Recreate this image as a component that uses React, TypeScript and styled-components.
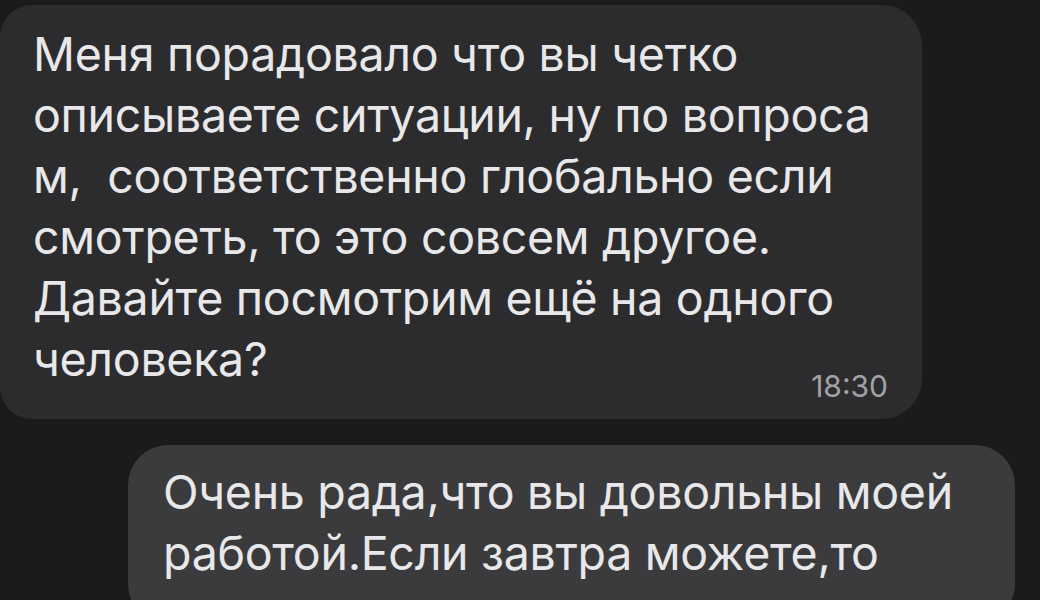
import styled, { createGlobalStyle } from "styled-components";

const GlobalStyle = createGlobalStyle`
  html, body {
    margin: 0;
    padding: 0;
    background: #1b1b1d;
    overflow: hidden;
  }
  body {
    font-family: Inter, "Noto Sans", sans-serif;
    -webkit-font-smoothing: antialiased;
  }
`;

const Chat = styled.div`
  width: 1040px;
  height: 600px;
  display: flex;
  flex-direction: column;
  gap: 26px;
  padding-top: 5px;
  box-sizing: border-box;
  overflow: hidden;
`;

const Bubble = styled.div<{ $mine?: boolean }>`
  box-sizing: border-box;
  flex-shrink: 0;
  align-self: ${(p) => (p.$mine ? "flex-end" : "flex-start")};
  width: ${(p) => (p.$mine ? "887px" : "922px")};
  margin-right: ${(p) => (p.$mine ? "25px" : "0")};
  background: ${(p) => (p.$mine ? "#3b3b3d" : "#2c2c2e")};
  border-radius: ${(p) => (p.$mine ? "40px" : "32px 40px 40px 32px")};
  padding: ${(p) => (p.$mine ? "17px 30px 40px 35px" : "19px 34px 29px 33px")};
  color: #e8e8ea;
  font-size: 46.5px;
  line-height: 61px;
  letter-spacing: -0.3px;
`;

const Line = styled.div`
  white-space: nowrap;
`;

const LastLine = styled.div`
  display: flex;
  justify-content: space-between;
  align-items: flex-end;
  white-space: nowrap;
`;

const Time = styled.span`
  font-size: 30px;
  line-height: 30px;
  margin-bottom: -11px;
  color: #a2a2a6;
  letter-spacing: 0;
`;

export default function App() {
  return (
    <>
      <GlobalStyle />
      <Chat>
        <Bubble>
          <Line>Меня порадовало что вы четко</Line>
          <Line>описываете ситуации, ну по вопроса</Line>
          <Line>м,&nbsp; соответственно глобально если</Line>
          <Line>смотреть, то это совсем другое.</Line>
          <Line>Давайте посмотрим ещё на одного</Line>
          <LastLine>
            <span>человека?</span>
            <Time>18:30</Time>
          </LastLine>
        </Bubble>
        <Bubble $mine>
          <Line>Очень рада,что вы довольны моей</Line>
          <Line>работой.Если завтра можете,то</Line>
        </Bubble>
      </Chat>
    </>
  );
}
